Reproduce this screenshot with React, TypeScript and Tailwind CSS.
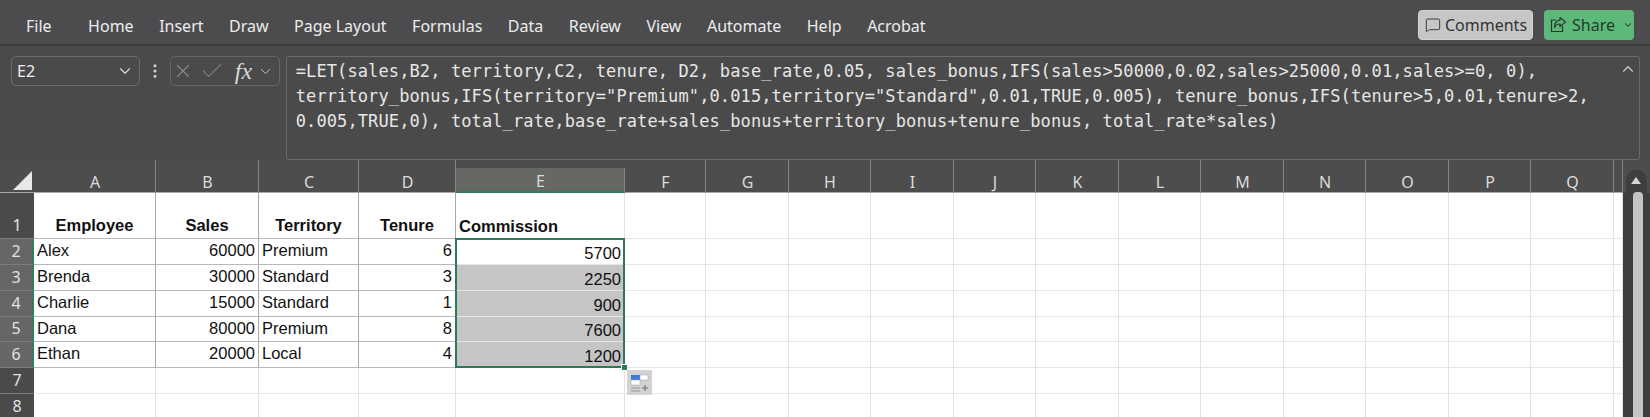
import React from "react";
import { Check, ChevronDown, ChevronUp, EllipsisVertical, MessageSquare, X } from "lucide-react";
import clsx from "clsx";

const tabs = ["Home", "Insert", "Draw", "Page Layout", "Formulas", "Data", "Review", "View", "Automate", "Help", "Acrobat"];
const letters = ["A", "B", "C", "D", "E", "F", "G", "H", "I", "J", "K", "L", "M", "N", "O", "P", "Q", ""];

const people = [
  ["Alex", "60000", "Premium", "6", "5700"],
  ["Brenda", "30000", "Standard", "3", "2250"],
  ["Charlie", "15000", "Standard", "1", "900"],
  ["Dana", "80000", "Premium", "8", "7600"],
  ["Ethan", "20000", "Local", "4", "1200"],
];

const rowHeights = ["h-[46px]", "h-[26px]", "h-[26px]", "h-[26px]", "h-[25px]", "h-[26px]", "h-[26px]", "h-[26px]"];

const gridCols = "grid grid-cols-[34px_122px_103px_100px_97px_169px_81px_83px_82px_83px_82px_83px_82px_83px_82px_83px_82px_83px_9px]";

const Cell = ({ row, col, children }: { row: number; col: number; children?: React.ReactNode }) => {
  const inTable = col < 4 && row < 6;
  return (
    <div
      className={clsx(
        "relative flex overflow-visible text-[16.5px] text-[#111] border-b border-r",
        rowHeights[row],
        inTable ? "border-b-[#b9b9bd] border-r-[#a9a9ad]" : "border-b-[#e6e6e6] border-r-[#e2e2e4]",
        col === 4 && row > 1 && row < 6 && "bg-[#c6c5c5] border-b-[#b2b1b1]"
      )}
    >
      {children}
    </div>
  );
};

const QuickAnalysis = () => (
  <div className="absolute left-[2px] top-[2px] z-20 flex h-[25px] w-[25px] items-center justify-center border border-[#d4d4d4] bg-[#d2d2d2]">
    <svg width="20" height="18" viewBox="0 0 20 18">
      <rect x="1" y="1" width="9" height="5" fill="#3f78e0" />
      <rect x="10" y="1" width="8" height="5" fill="#fff" stroke="#9a9a9a" strokeWidth="0.5" />
      <rect x="1" y="6" width="9" height="5" fill="#fff" stroke="#9a9a9a" strokeWidth="0.5" />
      <path d="M1 14h9M1 17h9" stroke="#9a9a9a" />
      <path d="M15 11v6M12 14h6" stroke="#8c8c8c" strokeWidth="1.6" />
    </svg>
  </div>
);

const ShareIcon = () => (
  <svg width="17" height="17" viewBox="0 0 17 17" fill="none" stroke="currentColor" strokeWidth="1.2">
    <path d="M6 4H1.5v11.5h11V10" />
    <path d="M10 1.5l5.5 4.5-5.5 4.5V8C7.5 8 5.5 9 4.5 11.5 4.5 7.5 6.5 4.5 10 4.2z" strokeLinejoin="round" />
  </svg>
);

const App = () => {
  return (
    <div className="flex h-[417px] w-[1650px] flex-col overflow-hidden bg-[#4a4a4a] font-['Noto_Sans',sans-serif]">
      {/* menu */}
      <div className="flex h-[46px] shrink-0 items-center justify-between border-b-2 border-b-[#3c3c3d] bg-[#4c4c4e] pr-[16px] pt-[5px] text-[16px] text-[#ececec]">
        <div className="flex items-center gap-[25.5px] pl-[26px] pt-[2px]">
          <span className="mr-[11px]">File</span>
          {tabs.map((tab) => (
            <span key={tab}>{tab}</span>
          ))}
        </div>
        <div className="flex items-center gap-[11px]">
          <button className="flex h-[30px] w-[115px] items-center gap-[4px] rounded-[4px] border border-[#d2d2d2] bg-[#c6c6c6] pl-[6px] text-[#333]">
            <MessageSquare size={16} strokeWidth={1.4} />
            Comments
          </button>
          <button className="flex h-[30px] w-[90px] items-center gap-[5px] rounded-[4px] bg-[#5cb97a] pl-[6px] text-[#263a2c]">
            <ShareIcon />
            Share
            <ChevronDown size={10} strokeWidth={2.5} className="ml-[3px]" />
          </button>
        </div>
      </div>

      {/* formula bar */}
      <div className="flex h-[114px] shrink-0 items-start gap-[6px] pl-[11px] pr-[10px] pt-[10px]">
        <div className="flex h-[30px] w-[129px] items-center justify-between rounded-[5px] border border-[#6b6b6b] pl-[5px] pr-[5px] text-[16px] text-[#ececec]">
          E2
          <ChevronDown size={18} strokeWidth={1.7} className="text-[#d2d2d2]" />
        </div>
        <EllipsisVertical size={18} strokeWidth={2.2} className="mt-[6px] text-[#d0d0d0]" />
        <div className="flex h-[30px] w-[110px] items-center rounded-[5px] border border-[#656565] text-[#8b8b8b]">
          <X size={22} strokeWidth={1.2} className="ml-[1px]" />
          <Check size={26} strokeWidth={1.1} className="ml-[5px] text-[#7c7c7c]" />
          <span className="ml-[10px] font-['Liberation_Serif',serif] text-[24px] italic leading-none text-[#d8d8d8]">fx</span>
          <ChevronDown size={17} strokeWidth={1.4} className="ml-[5px] text-[#c0c0c0]" />
        </div>
        <div className="relative h-[104px] w-[1356px] rounded-[3px] border border-[#6a6a6a] pl-[9px] pt-[2px] font-['DejaVu_Sans_Mono',monospace] text-[17px] leading-[25px] tracking-[0.11px] text-[#e6e6e6]">
          <div className="whitespace-nowrap">{'=LET(sales,B2, territory,C2, tenure, D2, base_rate,0.05, sales_bonus,IFS(sales>50000,0.02,sales>25000,0.01,sales>=0, 0),'}</div>
          <div className="whitespace-nowrap">{'territory_bonus,IFS(territory="Premium",0.015,territory="Standard",0.01,TRUE,0.005), tenure_bonus,IFS(tenure>5,0.01,tenure>2,'}</div>
          <div className="whitespace-nowrap">{"0.005,TRUE,0), total_rate,base_rate+sales_bonus+territory_bonus+tenure_bonus, total_rate*sales)"}</div>
          <ChevronUp size={18} strokeWidth={1.5} className="absolute right-[2px] top-[3px] text-[#cfcfcf]" />
        </div>
      </div>

      {/* sheet */}
      <div className="flex min-h-0 flex-1">
        <div className="w-[1623px] overflow-hidden">
          <div className={clsx(gridCols, "h-[33px] bg-[#4d4d4d] text-[16px] text-[#dcdcdc]")}>
            <div className="relative border-b border-b-[#a8a8a8]">
              <div className="absolute bottom-[2px] right-[2px] h-0 w-0 border-b-[19px] border-l-[19px] border-b-[#e8e8e8] border-l-transparent" />
            </div>
            {letters.map((letter, i) => (
              <div
                key={i}
                className={clsx(
                  "flex items-end justify-center border-r border-b border-r-[#868686] border-b-[#a8a8a8] pl-[1px] leading-[20px]",
                  i === 4 && "mt-[8px] !border-b-2 !border-b-[#2f7d5a] bg-[#666864]"
                )}
              >
                {letter}
              </div>
            ))}
          </div>
          <div className={clsx(gridCols, "bg-white font-['Liberation_Sans',sans-serif]")}>
            {rowHeights.map((_, row) => {
              const person = row >= 1 && row <= 5 ? people[row - 1] : null;
              return (
                <React.Fragment key={row}>
                  <div
                    className={clsx(
                      "flex items-end justify-center border-b border-b-[#7d7d7d] pb-[1px] font-['Noto_Sans',sans-serif] text-[16px] text-[#e3e3e3]",
                      rowHeights[row],
                      person ? "border-r-2 border-r-[#2f7d5a] bg-[#666666]" : "bg-[#4a4a4a]"
                    )}
                  >
                    {row + 1}
                  </div>
                  {letters.map((_, col) => (
                    <Cell key={col} row={row} col={col}>
                      {row === 0 && col < 4 && (
                        <b className="w-full self-end pb-[3px] text-center leading-[20px]">{["Employee", "Sales", "Territory", "Tenure"][col]}</b>
                      )}
                      {row === 0 && col === 4 && <b className="self-end pb-[2px] pl-[3px] leading-[20px]">Commission</b>}
                      {person && col < 4 && (
                        <span className={clsx("w-full px-[3px] leading-[22px]", (col === 1 || col === 3) && "text-right")}>{person[col]}</span>
                      )}
                      {person && col === 4 && <span className="w-full self-end pr-[3px] text-right leading-[22px]">{person[4]}</span>}
                      {row === 1 && col === 4 && (
                        <div className="pointer-events-none absolute left-[-1px] top-[-1px] z-10 h-[130px] w-[170px] border-2 border-[#2b7a58]">
                          <div className="absolute bottom-[-5px] right-[-5px] h-[7px] w-[7px] border border-white bg-[#2b7a58]" />
                        </div>
                      )}
                      {row === 6 && col === 5 && <QuickAnalysis />}
                    </Cell>
                  ))}
                </React.Fragment>
              );
            })}
          </div>
        </div>
        {/* scrollbar */}
        <div className="flex w-[27px] flex-col bg-[#3f3d3f]">
          <div className="h-[33px] w-full bg-[#4d4d4d]">
            <div className="ml-[3px] mt-[10px] h-[23px] w-[21px] rounded-t-[10px] bg-[#3f3d3f] pl-[5px] pt-[7px]">
              <div className="h-0 w-0 border-x-[5px] border-b-[7px] border-x-transparent border-b-[#d5d5d5]" />
            </div>
          </div>
          <div className="ml-[10px] w-[10px] flex-1 -mt-[1px] rounded-t-[4px] bg-[#c6c3c7]" />
        </div>
      </div>
    </div>
  );
};

export default App;
